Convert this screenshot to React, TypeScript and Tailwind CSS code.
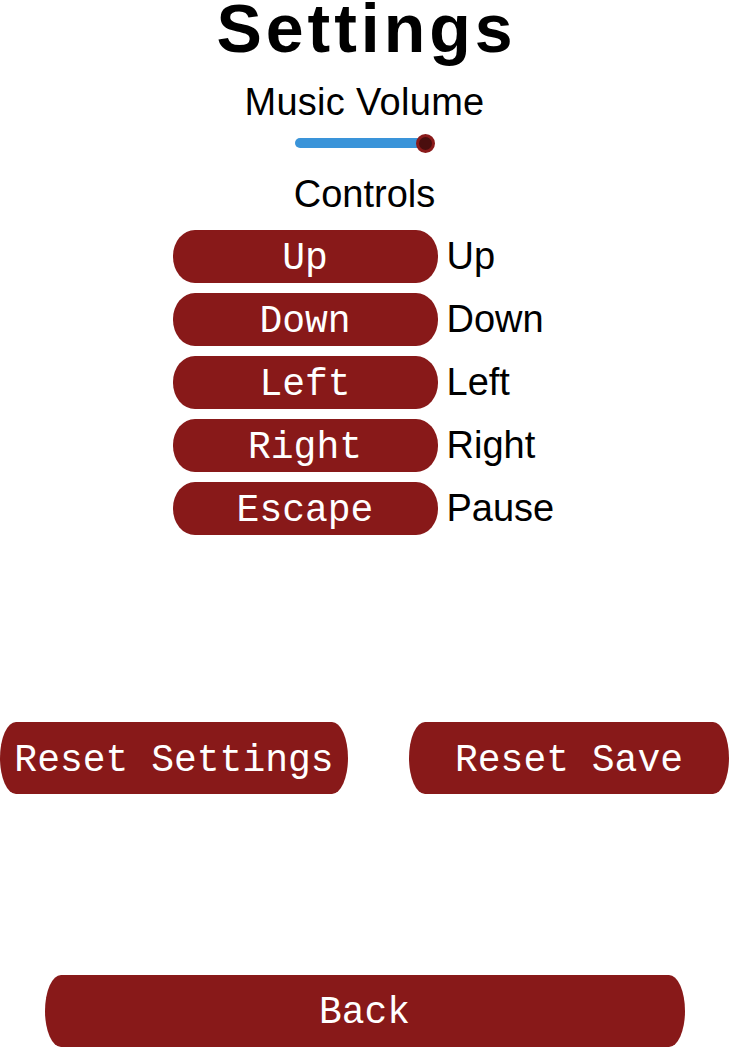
import React from "react";

const sans = { fontFamily: '"Liberation Sans", Arial, sans-serif' };
const mono = { fontFamily: '"Liberation Mono", "Courier New", monospace' };

const controls: [string, string][] = [
  ["Up", "Up"],
  ["Down", "Down"],
  ["Left", "Left"],
  ["Right", "Right"],
  ["Escape", "Pause"],
];

export default function App() {
  return (
    <div
      className="w-[729px] h-[1047px] bg-white text-black flex flex-col items-center overflow-hidden"
      style={sans}
    >
      <h1 className="h-[56px] text-[68px] leading-[56px] font-bold tracking-[4px] pl-[4px]">Settings</h1>
      <p className="mt-[24px] text-[38px] leading-[44px] tracking-[0.3px]">Music Volume</p>
      <div className="mt-[9px] h-[20px] w-[140px] flex items-center">
        <div className="w-[131px] h-[10px] rounded-full bg-[#3a94d9]" />
        <div className="-ml-[10px] w-[19px] h-[19px] rounded-full bg-[#4a0e0e] border-[3px] border-[#8a1a1a]" />
      </div>
      <p className="mt-[19px] text-[38px] leading-[44px]">Controls</p>
      <div className="mt-[14px] grid grid-cols-[265px_110px] gap-x-[9px] gap-y-[10px]">
        {controls.map(([key, action]) => (
          <React.Fragment key={action}>
            <button
              className="h-[53px] pt-[5px] rounded-[22px_/_26px] bg-[#881919] text-white text-[38px] leading-none flex items-center justify-center"
              style={mono}
            >
              {key}
            </button>
            <span className="text-[38px] leading-[53px]">{action}</span>
          </React.Fragment>
        ))}
      </div>
      <div className="mt-[187px] w-full flex justify-between">
        <button
          className="w-[348px] h-[72px] pt-[5px] rounded-[16px_/_36px] bg-[#881919] text-white text-[38px] leading-none"
          style={mono}
        >
          Reset Settings
        </button>
        <button
          className="w-[320px] h-[72px] pt-[5px] rounded-[16px_/_36px] bg-[#881919] text-white text-[38px] leading-none"
          style={mono}
        >
          Reset Save
        </button>
      </div>
      <button
        className="mt-[181px] w-[640px] h-[72px] pt-[4px] shrink-0 rounded-[16px_/_36px] bg-[#881919] text-white text-[38px] leading-none"
        style={mono}
      >
        Back
      </button>
    </div>
  );
}
